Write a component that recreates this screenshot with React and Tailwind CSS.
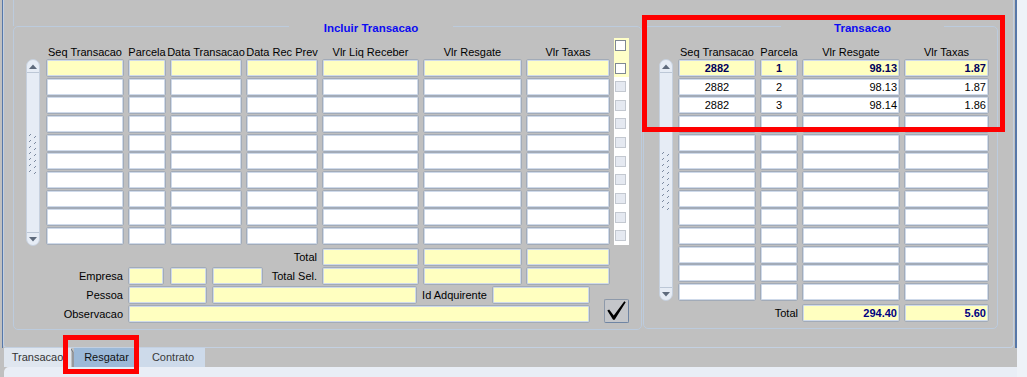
import React from "react";

const F = "font-['Liberation_Sans',Arial,sans-serif]";

const Field = ({ w, y, children, cls = "" }) => (
  <div
    className={`${w} h-[18px] shrink-0 rounded-[2px] border border-[#a2abb8] shadow-[inset_0_0_0_1px_#cfdaea] ${
      y ? "bg-[#ffffc0]" : "bg-white"
    } flex items-center leading-[16px] ${cls}`}
  >
    {children}
  </div>
);

const Check = ({ on }) => (
  <div
    className={`w-[11px] h-[11px] border ${
      on ? "bg-white border-[#7f8893]" : "bg-[#e5e9f1] border-[#c3c8d0]"
    }`}
  />
);

const Grip = ({ n }) => (
  <svg width="10" height={n * 6} viewBox={`0 0 10 ${n * 6}`}>
    {Array.from({ length: n }).map((_, i) => (
      <g key={i} stroke="#7c8aa0" strokeWidth="1">
        <line x1="1" y1={i * 6 + 4} x2="3" y2={i * 6 + 2} />
        <line x1="6" y1={i * 6 + 6} x2="8" y2={i * 6 + 4} />
      </g>
    ))}
  </svg>
);

const Scroll = ({ h, n }) => (
  <div
    className={`${h} w-[14px] rounded-[7px] bg-[#e6ecf5] border border-[#c6d0de] flex flex-col overflow-hidden`}
  >
    <div className="h-[13px] shrink-0 flex items-center justify-center border-b border-[#bcc7d6]">
      <svg width="8" height="5" viewBox="0 0 8 5">
        <path d="M0 5 L4 0.5 L8 5 Z" fill="#5e6a7c" />
      </svg>
    </div>
    <div className="flex-1 flex items-center justify-center">
      <Grip n={n} />
    </div>
    <div className="h-[13px] shrink-0 flex items-center justify-center border-t border-[#bcc7d6]">
      <svg width="8" height="5" viewBox="0 0 8 5">
        <path d="M0 0 L4 4.5 L8 0 Z" fill="#5e6a7c" />
      </svg>
    </div>
  </div>
);

const LCOLS = [
  { w: "w-[78px]", label: "Seq Transacao" },
  { w: "w-[38px]", label: "Parcela" },
  { w: "w-[72px]", label: "Data Transacao" },
  { w: "w-[72px]", label: "Data Rec Prev" },
  { w: "w-[97px]", label: "Vlr Liq Receber" },
  { w: "w-[99px]", label: "Vlr Resgate" },
  { w: "w-[84px]", label: "Vlr Taxas" },
];

const RCOLS = [
  { w: "w-[78px]", label: "Seq Transacao", a: "justify-center" },
  { w: "w-[38px]", label: "Parcela", a: "justify-center" },
  { w: "w-[98px]", label: "Vlr Resgate", a: "justify-end pr-[2px]" },
  { w: "w-[85px]", label: "Vlr Taxas", a: "justify-end pr-[2px]" },
];

const RDATA = [
  ["2882", "1", "98.13", "1.87"],
  ["2882", "2", "98.13", "1.87"],
  ["2882", "3", "98.14", "1.86"],
];

const Header = ({ cols }) => (
  <div className="h-[21px] flex gap-[4px]">
    {cols.map((c) => (
      <div
        key={c.label}
        className={`${c.w} shrink-0 flex justify-center whitespace-nowrap pt-[8px] leading-[13px]`}
      >
        {c.label}
      </div>
    ))}
  </div>
);

export default function App() {
  return (
    <div
      className={`relative w-[1027px] h-[377px] overflow-hidden bg-[#eef2f8] flex ${F} text-[11px] text-black`}
    >
      <div className="w-[1017px] shrink-0 flex flex-col bg-[#c0c0c0]">
        {/* tab page */}
        <div className="h-[348px] ml-[2px] w-[1015px] flex border-l border-r-2 border-[#5677a8]">
          <div className="w-[1011px] h-full border-l border-r border-b border-[#c3d0e1] rounded-b-[4px] flex flex-col pl-[9px]">
            <div className="h-[26px] w-px bg-[#bccbdd]" />
            <div className="flex">
              {/* Incluir Transacao frame */}
              <div className="relative w-[629px] h-[304px] border border-[#bccbdd] rounded-[5px]">
                <div className="absolute top-[-6px] left-[275px] w-[164px] bg-[#c0c0c0] text-center font-bold text-[11.5px] leading-[14px] text-[#0c0cf2]">
                  Incluir Transacao
                </div>
                <div className="flex mt-[11px]">
                  <div className="ml-[12px] mt-[21px]">
                    <Scroll h="h-[187px]" n={7} />
                  </div>
                  <div className="ml-[6px] flex flex-col">
                    <Header cols={LCOLS} />
                    <div className="flex flex-col gap-[0.67px]">
                      {Array.from({ length: 10 }).map((_, r) => (
                        <div key={r} className="flex gap-[4px]">
                          {LCOLS.map((c) => (
                            <Field key={c.label} w={c.w} y={r === 0} />
                          ))}
                        </div>
                      ))}
                    </div>
                  </div>
                  <div className="ml-[4px] w-[15px] h-[207px] bg-white flex flex-col">
                    <div className="h-[21px] bg-[#ffffc8] pt-[2px] pl-[1px]">
                      <Check on />
                    </div>
                    <div className="flex flex-col gap-[0.67px]">
                      {Array.from({ length: 10 }).map((_, r) => (
                        <div
                          key={r}
                          className={`h-[18px] flex items-center pl-[1px] ${
                            r === 0 ? "bg-[#ffffc8]" : ""
                          }`}
                        >
                          <Check on={r === 0} />
                        </div>
                      ))}
                    </div>
                  </div>
                </div>

                <div className="mt-[2px] flex flex-col gap-[1px] leading-[18px]">
                  <div className="flex h-[18px]">
                    <div className="w-[303px] text-right">Total</div>
                    <div className="ml-[5px] flex gap-[4px]">
                      <Field w="w-[97px]" y />
                      <Field w="w-[99px]" y />
                      <Field w="w-[84px]" y />
                    </div>
                  </div>
                  <div className="flex h-[18px]">
                    <div className="w-[109px] text-right">Empresa</div>
                    <div className="ml-[5px]">
                      <Field w="w-[36px]" y />
                    </div>
                    <div className="ml-[6px]">
                      <Field w="w-[37px]" y />
                    </div>
                    <div className="ml-[5px]">
                      <Field w="w-[51px]" y />
                    </div>
                    <div className="w-[54px] text-right whitespace-nowrap">Total Sel.</div>
                    <div className="ml-[5px] flex gap-[4px]">
                      <Field w="w-[97px]" y />
                      <Field w="w-[99px]" y />
                      <Field w="w-[84px]" y />
                    </div>
                  </div>
                  <div className="flex">
                    <div className="flex flex-col gap-[1px]">
                      <div className="flex h-[18px]">
                        <div className="w-[109px] text-right">Pessoa</div>
                        <div className="ml-[5px]">
                          <Field w="w-[79px]" y />
                        </div>
                        <div className="ml-[5px]">
                          <Field w="w-[205px]" y />
                        </div>
                        <div className="w-[75px] text-center whitespace-nowrap">Id Adquirente</div>
                        <Field w="w-[98px]" y />
                      </div>
                      <div className="flex h-[18px]">
                        <div className="w-[109px] text-right">Observacao</div>
                        <div className="ml-[5px]">
                          <Field w="w-[462px]" y />
                        </div>
                      </div>
                    </div>
                    <div className="ml-[14px] self-end w-[25px] h-[24px] rounded-[2px] border border-[#8d99aa] border-b-[#6f85a3] border-r-[#6f85a3] bg-[#c4c6ca] flex items-center justify-center">
                      <svg width="25" height="24" viewBox="0 0 25 24">
                        <path
                          d="M2.5 11.5 L4.5 10.5 L9.5 17 L21 1.5 L22.5 2.5 L10.5 21.5 L8.8 21.5 Z"
                          fill="#000"
                        />
                      </svg>
                    </div>
                  </div>
                </div>
              </div>

              {/* Transacao frame */}
              <div className="relative ml-[1px] w-[355px] h-[303px] border border-[#bccbdd] rounded-[5px]">
                <div className="absolute top-[-6px] left-[137px] w-[163px] bg-[#c0c0c0] text-center font-bold text-[11.5px] leading-[14px] text-[#0c0cf2]">
                  Transacao
                </div>
                <div className="flex mt-[11px]">
                  <div className="ml-[15px] mt-[21px]">
                    <Scroll h="h-[242px]" n={10} />
                  </div>
                  <div className="ml-[5px] flex flex-col">
                    <Header cols={RCOLS} />
                    <div className="flex flex-col gap-[0.67px]">
                      {Array.from({ length: 13 }).map((_, r) => (
                        <div key={r} className="flex gap-[4px]">
                          {RCOLS.map((c, ci) => (
                            <Field
                              key={c.label}
                              w={c.w}
                              y={r === 0}
                              cls={`${c.a} ${
                                r === 0 ? "font-bold text-[#00005a]" : "text-black"
                              }`}
                            >
                              {RDATA[r] ? RDATA[r][ci] : ""}
                            </Field>
                          ))}
                        </div>
                      ))}
                    </div>
                    <div className="mt-[3px] flex h-[18px] leading-[18px]">
                      <div className="w-[120px] text-right">Total</div>
                      <div className="ml-[4px] flex gap-[4px]">
                        <Field w="w-[98px]" y cls="justify-end pr-[2px] font-bold text-[#000080]">
                          294.40
                        </Field>
                        <Field w="w-[85px]" y cls="justify-end pr-[2px] font-bold text-[#000080]">
                          5.60
                        </Field>
                      </div>
                    </div>
                  </div>
                </div>
              </div>
            </div>
          </div>
        </div>

        {/* tabs */}
        <div className="h-[19px] flex">
          <div className="ml-[4px] w-[67px] bg-[#dfe6ef] text-[#333] flex items-center justify-center">
            Transacao
          </div>
          <svg width="3" height="19" viewBox="0 0 3 19" className="shrink-0">
            <rect x="0" y="0" width="3" height="19" fill="#c0c0c0" />
            <path d="M0 1 L2 4 L2 19" stroke="#6d737c" strokeWidth="1" fill="none" />
          </svg>
          <div className="w-[62px] bg-[#9cb9d8] text-[#111] flex items-center justify-center pl-[3px]">
            Resgatar
          </div>
          <div className="ml-[2px] w-[67px] bg-[#cddaea] text-[#3a3a3a] flex items-center justify-center pl-[3px]">
            Contrato
          </div>
        </div>
        <div className="flex-1 flex">
          <div className="ml-[4px] flex-1 bg-[#e9eef6] rounded-tl-[5px]" />
        </div>
      </div>
      <div className="flex-1 bg-[#eef2f8]" />

      {/* annotation boxes */}
      <div className="absolute left-[642px] top-[15px] w-[363px] h-[117px] border-[5px] border-[#ff0000]" />
      <div className="absolute left-[63px] top-[335px] w-[76px] h-[39px] border-[5px] border-[#ff0000]" />
    </div>
  );
}
